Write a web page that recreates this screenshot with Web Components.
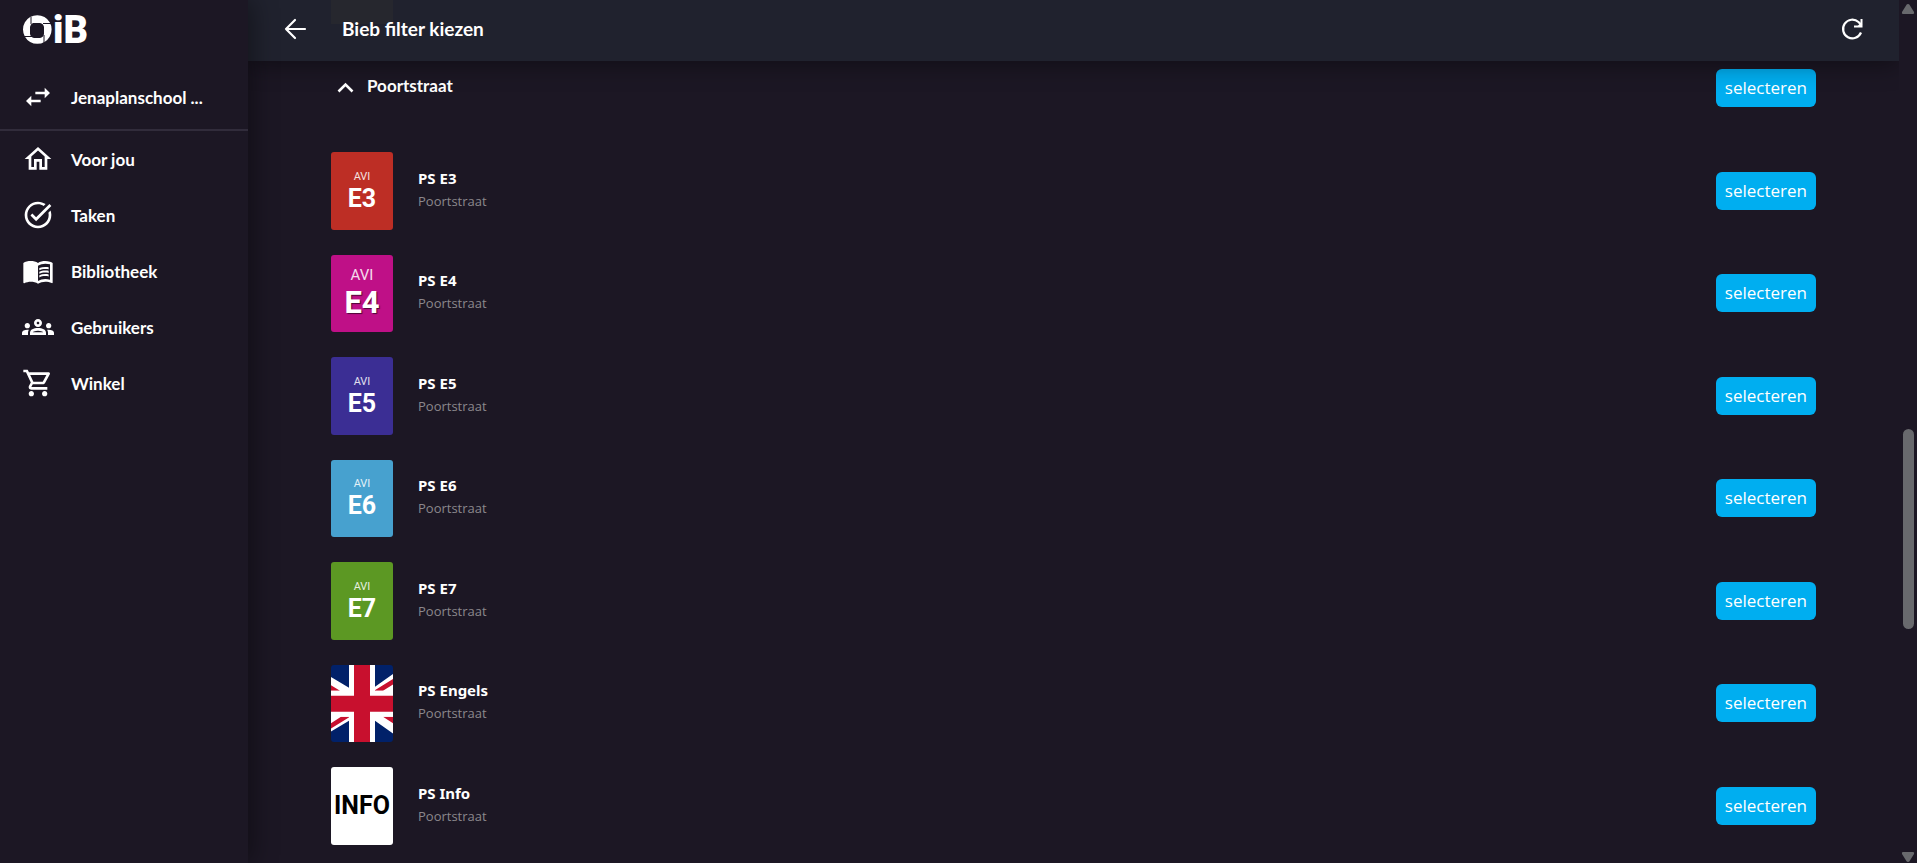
<!DOCTYPE html>
<html lang="nl">
<head>
<meta charset="utf-8">
<meta name="viewport" content="width=device-width, initial-scale=1">
<title>Bieb filter kiezen</title>
<style>
    body {
        margin: 0;
        background: #1c1724;
        color: #fff;
        font-family: "Open Sans", "Noto Sans", sans-serif;
    }
</style>
</head>
<body>
<oib-app>
    <oib-sidebar slot="sidebar">
        <oib-nav-item slot="school" icon="swap">Jenaplanschool ...</oib-nav-item>
        <oib-nav-item icon="home">Voor jou</oib-nav-item>
        <oib-nav-item icon="task">Taken</oib-nav-item>
        <oib-nav-item icon="book">Bibliotheek</oib-nav-item>
        <oib-nav-item icon="groups">Gebruikers</oib-nav-item>
        <oib-nav-item icon="cart">Winkel</oib-nav-item>
    </oib-sidebar>
    <oib-topbar slot="topbar">Bieb filter kiezen</oib-topbar>
    <oib-group name="Poortstraat">
        <oib-row name="PS E3" place="Poortstraat"><oib-cover color="#bd2e25" level="E3"></oib-cover></oib-row>
        <oib-row name="PS E4" place="Poortstraat"><oib-cover color="#bf1087" level="E4" large></oib-cover></oib-row>
        <oib-row name="PS E5" place="Poortstraat"><oib-cover color="#3b2e94" level="E5"></oib-cover></oib-row>
        <oib-row name="PS E6" place="Poortstraat"><oib-cover color="#47a1cf" level="E6"></oib-cover></oib-row>
        <oib-row name="PS E7" place="Poortstraat"><oib-cover color="#5c9823" level="E7"></oib-cover></oib-row>
        <oib-row name="PS Engels" place="Poortstraat"><oib-flag></oib-flag></oib-row>
        <oib-row name="PS Info" place="Poortstraat"><oib-cover color="#fff" word="INFO"></oib-cover></oib-row>
    </oib-group>
    <oib-scrollbar slot="scrollbar"></oib-scrollbar>
</oib-app>

<script>
const icons = {
    swap: '<path d="M6.99 11 3 15l3.99 4v-3H14v-2H6.99v-3zM21 9l-3.99-4v3H10v2h7.01v3L21 9z"/>',
    home: '<path d="m12 5.69 5 4.5V18h-2v-6H9v6H7v-7.81l5-4.5M12 3 2 12h3v8h6v-6h2v6h6v-8h3L12 3z"/>',
    task: '<path d="M22 5.18 10.59 16.6l-4.24-4.24 1.41-1.41 2.83 2.83 10-10L22 5.18zM19.79 10.22c.13.57.21 1.17.21 1.78 0 4.42-3.58 8-8 8s-8-3.58-8-8 3.58-8 8-8c1.58 0 3.04.46 4.28 1.25l1.44-1.44C16.1 2.67 14.13 2 12 2 6.48 2 2 6.48 2 12s4.48 10 10 10 10-4.48 10-10c0-1.19-.22-2.33-.6-3.39l-1.61 1.61z"/>',
    book: '<path d="M21 5c-1.11-.35-2.33-.5-3.5-.5-1.95 0-4.05.4-5.5 1.5-1.45-1.1-3.55-1.5-5.5-1.5S2.45 4.9 1 6v14.65c0 .25.25.5.5.5.1 0 .15-.05.25-.05C3.1 20.45 5.05 20 6.5 20c1.95 0 4.05.4 5.5 1.5 1.35-.85 3.8-1.5 5.5-1.5 1.65 0 3.35.3 4.75 1.05.1.05.15.05.25.05.25 0 .5-.25.5-.5V6c-.6-.45-1.25-.75-2-1zm0 13.5c-1.1-.35-2.3-.5-3.5-.5-1.7 0-4.15.65-5.5 1.5V8c1.35-.85 3.8-1.5 5.5-1.5 1.2 0 2.4.15 3.5.5v11.5z"/><path d="M17.5 10.5c.88 0 1.73.09 2.5.26V9.24c-.79-.15-1.64-.24-2.5-.24-1.7 0-3.24.29-4.5.83v1.66c1.13-.64 2.7-.99 4.5-.99zM13 12.49v1.66c1.13-.64 2.7-.99 4.5-.99.88 0 1.73.09 2.5.26V11.9c-.79-.15-1.64-.24-2.5-.24-1.7 0-3.24.3-4.5.83zm4.5 1.84c-1.7 0-3.24.29-4.5.83v1.66c1.13-.64 2.7-.99 4.5-.99.88 0 1.73.09 2.5.26v-1.52c-.79-.16-1.64-.24-2.5-.24z"/>',
    groups: '<path d="M4 13c1.1 0 2-.9 2-2s-.9-2-2-2-2 .9-2 2 .9 2 2 2zM5.13 14.1C4.76 14.04 4.39 14 4 14c-.99 0-1.93.21-2.78.58C.48 14.9 0 15.62 0 16.43V18h4.5v-1.61c0-.83.23-1.61.63-2.29zM20 13c1.1 0 2-.9 2-2s-.9-2-2-2-2 .9-2 2 .9 2 2 2zM24 16.43c0-.81-.48-1.53-1.22-1.85C21.93 14.21 20.99 14 20 14c-.39 0-.76.04-1.13.1.4.68.63 1.46.63 2.29V18H24v-1.57zM16.24 13.65c-1.17-.52-2.61-.9-4.24-.9s-3.07.39-4.24.9C6.68 14.13 6 15.21 6 16.39V18h12v-1.61c0-1.18-.68-2.26-1.76-2.74zM8.07 16c.09-.23.13-.39.91-.69.97-.38 1.99-.56 3.02-.56s2.05.18 3.02.56c.77.3.81.46.91.69H8.07zM12 8c.55 0 1 .45 1 1s-.45 1-1 1-1-.45-1-1 .45-1 1-1m0-2c-1.66 0-3 1.34-3 3s1.34 3 3 3 3-1.34 3-3-1.34-3-3-3z"/>',
    cart: '<path d="M15.55 13c.75 0 1.41-.41 1.75-1.03l3.58-6.49c.37-.66-.11-1.48-.87-1.48H5.21l-.94-2H1v2h2l3.6 7.59-1.35 2.44C4.52 15.37 5.48 17 7 17h12v-2H7l1.1-2h7.45zM6.16 6h12.15l-2.76 5H8.53L6.16 6zM7 18c-1.1 0-1.99.9-1.99 2S5.9 22 7 22s2-.9 2-2-.9-2-2-2zm10 0c-1.1 0-1.99.9-1.99 2s.89 2 1.99 2 2-.9 2-2-.9-2-2-2z"/>'
};

class OibApp extends HTMLElement {
    constructor() {
        super();
        this.attachShadow({mode: 'open'}).innerHTML = `
        <style>
            :host {
                display: grid;
                grid-template-columns: 248px 1fr 18px;
                min-height: 100vh;
            }
            aside {
                z-index: 2;
                background: #1c1724;
                box-shadow: 4px 0 24px rgba(0, 0, 0, 0.4);
            }
            .page {
                min-width: 0;
            }
            main {
                padding: 8px 83px 0;
            }
        </style>
        <aside><slot name="sidebar"></slot></aside>
        <div class="page">
            <slot name="topbar"></slot>
            <main><slot></slot></main>
        </div>
        <slot name="scrollbar"></slot>
        `;
    }
}

class OibSidebar extends HTMLElement {
    constructor() {
        super();
        this.attachShadow({mode: 'open'}).innerHTML = `
        <style>
            :host {
                display: block;
            }
            .logo {
                display: flex;
                align-items: center;
                height: 59px;
                margin-bottom: 10px;
                padding-left: 23px;
                color: #fff;
                text-decoration: none;
            }
            .logo svg {
                display: block;
                width: 70px;
                height: 30px;
                overflow: visible;
            }
            text {
                font: 900 38px Roboto, sans-serif;
            }
            .school {
                padding-bottom: 4px;
                border-bottom: 2px solid #312c3b;
            }
        </style>
        <a class="logo" href="#">
            <svg viewBox="0 0 70 30" fill="#fff">
                <path fill-rule="evenodd" d="M14.300 .2a14.300 14.300 0 1 0 .01 0zM10 8h7a5 5 0 0 1 4 4v7a5 5 0 0 1-4 4h-6a5 5 0 0 1-4-4v-7a5 5 0 0 1 3-4z"/>
                <path fill="none" stroke="#1c1724" stroke-width="1" d="M8 2v7M28 8.500h-8M21 28v-8M1 21.500h9"/>
                <text x="30" y="28">iB</text>
            </svg>
        </a>
        <div class="school"><slot name="school"></slot></div>
        <nav><slot></slot></nav>
        `;
    }
}

class OibNavItem extends HTMLElement {
    connectedCallback() {
        this.attachShadow({mode: 'open'}).innerHTML = `
        <style>
            :host {
                display: block;
            }
            a {
                display: flex;
                align-items: center;
                gap: 17px;
                height: 56px;
                padding: 0 22px;
                color: #fff;
                font-family: Lato, "Noto Sans", sans-serif;
                font-size: 17px;
                font-weight: 700;
                text-decoration: none;
                white-space: nowrap;
            }
            svg {
                flex: none;
                width: 32px;
                height: 32px;
                fill: #fff;
            }
        </style>
        <a href="#"><svg viewBox="0 0 24 24" aria-hidden="true">${icons[this.getAttribute('icon')]}</svg><slot></slot></a>
        `;
    }
}

class OibTopbar extends HTMLElement {
    constructor() {
        super();
        this.attachShadow({mode: 'open'}).innerHTML = `
        <style>
            :host {
                display: block;
                position: relative;
                z-index: 1;
                background: #20222e;
                box-shadow: 0 4px 24px rgba(0, 0, 0, 0.4);
            }
            /* cover of the row that is scrolled under the bar */
            :host::before {
                content: "";
                position: absolute;
                left: 83px;
                top: 0;
                width: 62px;
                height: 24px;
                background: #26272e;
            }
            header {
                position: relative;
                display: flex;
                align-items: center;
                height: 61px;
                padding: 0 33px;
                box-sizing: border-box;
            }
            h1 {
                flex: 1;
                margin: 0 0 4px 33px;
                font-family: Lato, "Noto Sans", sans-serif;
                font-size: 19px;
                font-weight: 700;
                line-height: 24px;
            }
            button {
                display: flex;
                margin: 0 0 3px;
                padding: 0;
                border: 0;
                background: none;
            }
            svg {
                width: 28px;
                height: 28px;
                fill: none;
                stroke: #fff;
                stroke-width: 2.200;
            }
        </style>
        <header>
            <button aria-label="Terug"><svg viewBox="0 0 28 28"><path stroke-linecap="round" stroke-linejoin="round" d="m14 5-9 9 9 9M5 14h19"/></svg></button>
            <h1><slot></slot></h1>
            <button aria-label="Vernieuwen"><svg viewBox="0 0 28 28"><path d="M23 17.500A9.300 9.300 0 1 1 20.500 7l3 3"/><path fill="#fff" stroke="none" d="M24.500 4v8.500H16v-2h4L22.500 8V4z"/></svg></button>
        </header>
        `;
    }
}

class OibSelectButton extends HTMLElement {
    constructor() {
        super();
        this.attachShadow({mode: 'open'}).innerHTML = `
        <style>
            :host {
                display: block;
            }
            button {
                display: block;
                height: 38px;
                padding: 0 9px 1px;
                border: 0;
                border-radius: 6px;
                background: #00aef0;
                color: #fff;
                font: 17px "Open Sans", "Noto Sans", sans-serif;
                cursor: pointer;
            }
        </style>
        <button><slot></slot></button>
        `;
    }
}

class OibGroup extends HTMLElement {
    connectedCallback() {
        this.attachShadow({mode: 'open'}).innerHTML = `
        <style>
            :host {
                display: block;
            }
            .head {
                display: flex;
                align-items: flex-start;
                justify-content: space-between;
                padding-bottom: 33px;
            }
            h2 {
                display: flex;
                align-items: center;
                gap: 13px;
                margin: 4px 0 0 6px;
                font-family: Lato, "Noto Sans", sans-serif;
                font-size: 17px;
                font-weight: 700;
                line-height: 26px;
            }
            svg {
                width: 17px;
                height: 20px;
                margin-top: 4px;
                fill: none;
                stroke: #fff;
                stroke-width: 2.600;
            }
        </style>
        <section>
            <div class="head">
                <h2><svg viewBox="0 0 17 20" aria-hidden="true"><path d="m1.500 13.500 7-7 7 7"/></svg>${this.getAttribute('name')}</h2>
                <oib-select-button>selecteren</oib-select-button>
            </div>
            <slot></slot>
        </section>
        `;
    }
}

class OibRow extends HTMLElement {
    connectedCallback() {
        this.attachShadow({mode: 'open'}).innerHTML = `
        <style>
            :host {
                display: flex;
                align-items: center;
                gap: 25px;
                padding: 12px 0 13px;
            }
            .text {
                flex: 1;
                min-width: 0;
                padding-bottom: 2px;
            }
            h3, p {
                margin: 0;
                line-height: 23px;
            }
            h3 {
                font-family: "Noto Sans", sans-serif;
                font-size: 15px;
                font-weight: 700;
            }
            p {
                color: #8b888d;
                font-size: 13px;
            }
        </style>
        <slot></slot>
        <div class="text">
            <h3>${this.getAttribute('name')}</h3>
            <p>${this.getAttribute('place')}</p>
        </div>
        <oib-select-button>selecteren</oib-select-button>
        `;
    }
}

class OibCover extends HTMLElement {
    connectedCallback() {
        const word = this.getAttribute('word');
        this.attachShadow({mode: 'open'}).innerHTML = `
        <style>
            :host {
                display: flex;
                flex-direction: column;
                align-items: center;
                justify-content: center;
                width: 62px;
                aspect-ratio: 4 / 5;
                border-radius: 3px;
                overflow: hidden;
                background: ${this.getAttribute('color')};
                color: #fff;
                font-family: Roboto, sans-serif;
            }
            .avi {
                font-size: 11px;
                line-height: 15px;
                opacity: 0.85;
            }
            .level {
                font-size: 25px;
                font-weight: 700;
                line-height: 29px;
            }
            :host([large]) .avi {
                font-size: 15px;
                line-height: 20px;
            }
            :host([large]) .level {
                font-size: 31px;
                line-height: 36px;
                text-shadow: 1px 1px 1px rgba(0, 0, 0, 0.6);
            }
            .word {
                color: #000;
                font-size: 25px;
                font-weight: 700;
            }
        </style>
        ${word ? `<span class="word">${word}</span>`
               : `<span class="avi">AVI</span><span class="level">${this.getAttribute('level')}</span>`}
        `;
    }
}

class OibFlag extends HTMLElement {
    constructor() {
        super();
        this.attachShadow({mode: 'open'}).innerHTML = `
        <style>
            :host {
                display: block;
                width: 62px;
                aspect-ratio: 4 / 5;
                border-radius: 3px;
                overflow: hidden;
            }
            svg {
                display: block;
                width: 100%;
                height: 100%;
            }
        </style>
        <svg viewBox="0 0 62 78" preserveAspectRatio="none" role="img" aria-label="Britse vlag">
            <path fill="#012169" d="M0 0h62v78H0z"/>
            <path fill="#fff" d="M0 12v19h18v-8zM62 9v22H44V22zM0 67V47h18v9zM62 69V47H44v9z"/>
            <path fill="#c8102e" d="M0 20.500 9 26H0zM43 26l19-12v5.500L52 26zM0 64l19-12h-9L0 58.500zM62 58.500 52 52h10z"/>
            <path fill="#fff" d="M18 0h26v78H18zM0 26h62v26H0z"/>
            <path fill="#c8102e" d="M23 0h16v78H23zM0 31h62v16H0z"/>
        </svg>
        `;
    }
}

class OibScrollbar extends HTMLElement {
    constructor() {
        super();
        this.attachShadow({mode: 'open'}).innerHTML = `
        <style>
            :host {
                display: grid;
                grid-template-rows: auto 415fr 200fr 223fr auto;
                justify-items: center;
                box-sizing: border-box;
                height: 100vh;
                padding: 4px 0 1px;
                position: sticky;
                top: 0;
                z-index: 2;
                background: #1c1724;
            }
            svg {
                display: block;
                width: 14px;
                height: 10px;
                fill: #68696d;
            }
            .thumb {
                grid-row: 3;
                width: 11px;
                border-radius: 6px;
                background: #68696d;
            }
            .down {
                grid-row: 5;
            }
        </style>
        <svg viewBox="0 0 14 10"><path d="M7 0q1 0 1.500.700L13 8q.700 1.800-1 2H2Q.300 9.800 1 8L5.500.700Q6 0 7 0z"/></svg>
        <div class="thumb"></div>
        <svg class="down" viewBox="0 0 14 10"><path d="M7 10q1 0 1.500-.700L13 2q.700-1.800-1-2H2Q.300.200 1 2l4.500 7.300Q6 10 7 10z"/></svg>
        `;
    }
}

customElements.define('oib-app', OibApp);
customElements.define('oib-sidebar', OibSidebar);
customElements.define('oib-nav-item', OibNavItem);
customElements.define('oib-topbar', OibTopbar);
customElements.define('oib-select-button', OibSelectButton);
customElements.define('oib-group', OibGroup);
customElements.define('oib-row', OibRow);
customElements.define('oib-cover', OibCover);
customElements.define('oib-flag', OibFlag);
customElements.define('oib-scrollbar', OibScrollbar);
</script>
</body>
</html>
